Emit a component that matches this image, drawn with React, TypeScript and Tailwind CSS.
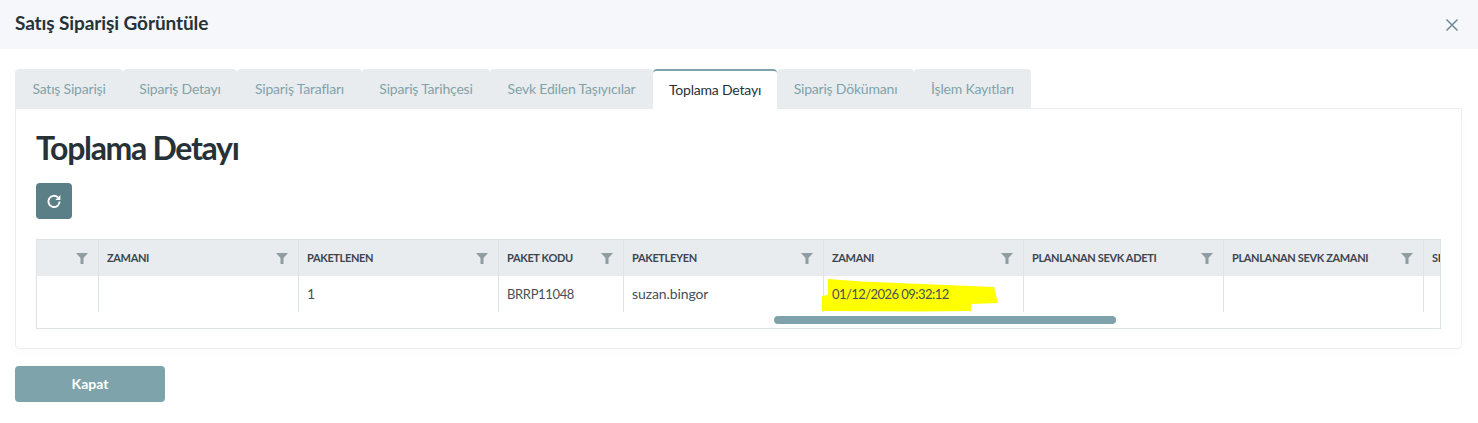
const FONT = "font-['Lato','Noto_Sans',sans-serif]";

const tabs = [
  { label: 'Satış Siparişi', width: 'w-[108px]' },
  { label: 'Sipariş Detayı', width: 'w-[114px]' },
  { label: 'Sipariş Tarafları', width: 'w-[125px]' },
  { label: 'Sipariş Tarihçesi', width: 'w-[128px]' },
  { label: 'Sevk Edilen Taşıyıcılar', width: 'w-[163px]' },
  { label: 'Toplama Detayı', width: 'w-[124px]', active: true },
  { label: 'Sipariş Dökümanı', width: 'w-[137px]' },
  { label: 'İşlem Kayıtları', width: 'w-[117px]' },
];

const NUM_TEXT = 'text-[13px] tracking-[-0.35px] mt-px';
const DATE_TEXT = 'text-[13px] tracking-[-0.55px] mt-px';
const PLAIN_TEXT = 'text-[14px] tracking-[-0.1px] -mt-px';

const columns = [
  { title: '', value: '', width: 'w-[62px]', text: PLAIN_TEXT },
  { title: 'ZAMANI', value: '', width: 'w-[200px]', text: PLAIN_TEXT },
  { title: 'PAKETLENEN', value: '1', width: 'w-[200px]', text: PLAIN_TEXT },
  { title: 'PAKET KODU', value: 'BRRP11048', width: 'w-[125px]', text: NUM_TEXT },
  { title: 'PAKETLEYEN', value: 'suzan.bingor', width: 'w-[200px]', text: PLAIN_TEXT },
  { title: 'ZAMANI', value: '01/12/2026 09:32:12', width: 'w-[200px]', text: DATE_TEXT, marked: true },
  { title: 'PLANLANAN SEVK ADETI', value: '', width: 'w-[200px]', text: PLAIN_TEXT },
  { title: 'PLANLANAN SEVK ZAMANI', value: '', width: 'w-[200px]', text: PLAIN_TEXT },
  { title: 'SEVK', value: '', width: 'w-[200px]', text: PLAIN_TEXT },
];

function FilterIcon() {
  return (
    <svg width="12" height="11" viewBox="0 0 12 11" className="shrink-0">
      <path d="M0 0H12L7.5 5V11H4.5V5Z" fill="#8f9ca1" />
    </svg>
  );
}

function RefreshIcon() {
  return (
    <svg width="16" height="16" viewBox="0 0 16 16" fill="none">
      <path d="M11.9 4.4A5.6 5.6 0 1 0 13.6 8.5" stroke="#fff" strokeWidth="1.9" />
      <path d="M9.4 6.9L14.4 7V2Z" fill="#fff" />
    </svg>
  );
}

function Highlight() {
  return (
    <svg width="180" height="36" viewBox="0 0 180 36" className="absolute left-[-2px] top-0">
      <path d="M6 3L40 5.5L172 11L176 27L149 28L149 35L100 35.5L0 35V20L6 19Z" fill="#ffff00" />
    </svg>
  );
}

export default function App() {
  return (
    <div className={`${FONT} min-h-[423px] bg-white text-[#263238]`}>
      {/* Header */}
      <header className="h-[49px] bg-[#f5f7fa] pl-[15px] pr-[19px] flex items-center justify-between">
        <h2 className="text-[19px] font-bold tracking-[-0.1px] pb-0.5">Satış Siparişi Görüntüle</h2>
        <svg width="14" height="14" viewBox="0 0 14 14" fill="none">
          <path d="M1.5 1.5L12.5 12.5M12.5 1.5L1.5 12.5" stroke="#6f8a94" strokeWidth="1.5" />
        </svg>
      </header>

      <div className="pt-5 px-[15px] w-[1477px]">
        {/* Tabs */}
        <div className="relative z-10 flex h-10 -mb-px">
          {tabs.map((tab) => (
            <div
              key={tab.label}
              className={`${tab.width} rounded-t-[4px] flex items-center justify-center text-[14px] tracking-[-0.2px] pb-0.5 ${
                tab.active
                  ? 'bg-white border-t-2 border-[#7fa3aa] text-[#263238]'
                  : 'bg-[#e9ecef] text-[#7fa3aa]'
              }`}
            >
              {tab.label}
            </div>
          ))}
        </div>

        {/* Panel */}
        <div className="h-[241px] border border-[#eceeef] rounded-b-[4px] bg-white pt-[19px] px-5 shadow-[0_4px_12px_rgba(0,0,0,0.015)]">
          <h1 className="text-[32px] leading-[40px] font-bold tracking-[-1.3px]">Toplama Detayı</h1>
          <button className="mt-[15px] w-9 h-9 rounded-[4px] bg-[#5a7f87] flex items-center justify-center">
            <RefreshIcon />
          </button>

          {/* Table */}
          <div className="relative mt-5 w-[1405px] h-[90px] border border-[#dee4e6] overflow-hidden shadow-[0_4px_12px_rgba(0,0,0,0.015)]">
            <div className="flex">
              {columns.map((col, i) => (
                <div key={i} className={`${col.width} shrink-0`}>
                  <div className="h-9 bg-[#e9ecef] border-r border-[#dee4e6] pl-2 pr-[10px] flex items-center justify-between">
                    <span className="text-[11px] font-bold tracking-[-0.35px] whitespace-nowrap text-[#3c4650]">{col.title}</span>
                    {col.title !== 'SEVK' && <span className="ml-auto"><FilterIcon /></span>}
                  </div>
                  <div className="relative h-9 border-r border-[#dee4e6] pl-2 flex items-center">
                    {col.marked && <Highlight />}
                    <span className={`relative ${col.text} whitespace-nowrap text-[#495057]`}>{col.value}</span>
                  </div>
                </div>
              ))}
            </div>
            <div className="absolute left-[737px] top-[76px] w-[342px] h-2 rounded-full bg-[#7fa3aa]" />
          </div>
        </div>

        <button className="mt-[17px] w-[150px] h-9 rounded-[4px] bg-[#7fa3aa] text-white text-[14px] font-bold pb-0.5">Kapat</button>
      </div>
    </div>
  );
}
